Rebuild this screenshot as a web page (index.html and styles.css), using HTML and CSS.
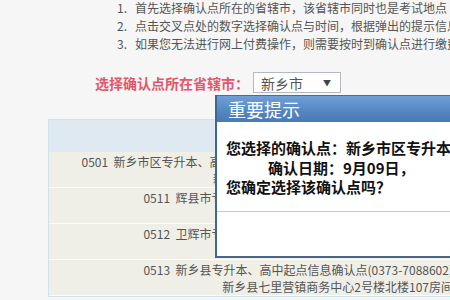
FILE: index.html
```html
<!DOCTYPE html>
<html lang="zh-CN">
<head>
    <meta charset="UTF-8">
    <title>选择确认点</title>
    <link rel="stylesheet" href="styles.css">
</head>
<body>
    <ul class="steps">
        <li><span class="num">1.</span>首先选择确认点所在的省辖市，该省辖市同时也是考试地点</li>
        <li><span class="num">2.</span>点击交叉点处的数字选择确认点与时间，根据弹出的提示信息确认</li>
        <li><span class="num">3.</span>如果您无法进行网上付费操作，则需要按时到确认点进行缴费</li>
    </ul>

    <div class="city-row">
        <label class="city-label">选择确认点所在省辖市：</label>
        <div class="city-select">
            <span>新乡市</span>
            <span class="arrow">▼</span>
        </div>
    </div>

    <div class="point-table">
        <div class="point-head"></div>
        <div class="point-row">0501&nbsp; 新乡市区专升本、高中起点信息确认点(0373-3033666,3033668)<br>新乡市人民路与新二街交叉口教育局院内一楼</div>
        <div class="point-row">0511&nbsp; 辉县市专升本、高中起点信息确认点(0373-6262735)<br>辉县市共城大道中段教育局招生办</div>
        <div class="point-row">0512&nbsp; 卫辉市专升本、高中起点信息确认点(0373-4410863)<br>卫辉市比干大道教育局招生办</div>
        <div class="point-row">0513&nbsp; 新乡县专升本、高中起点信息确认点(0373-7088602)<br>新乡县七里营镇商务中心2号楼北楼107房间</div>
    </div>

    <div class="dialog">
        <div class="dialog-title">重要提示</div>
        <div class="dialog-body">
            <p>您选择的确认点：新乡市区专升本、高中起点信息确认点，</p>
            <p class="date">确认日期：9月09日，</p>
            <p>您确定选择该确认点吗？</p>
        </div>
        <div class="dialog-foot"></div>
    </div>
</body>
</html>
```

FILE: styles.css
```css
body {
    margin: 0;
    background-color: #f6f6f6;
    font-family: "Noto Sans CJK SC", sans-serif;
    font-size: 12px;
    color: #555;
    overflow: hidden;
    height: 300px;
    position: relative;
}
.steps {
    list-style: none;
    margin: -1px 0 0;
    padding: 0 0 0 117px;
    white-space: nowrap;
}
.steps li {
    line-height: 18px;
}
.steps .num {
    display: inline-block;
    width: 18px;
}
.city-row {
    display: flex;
    align-items: center;
    margin-top: 19px;
    padding-left: 95px;
    height: 21px;
}
.city-label {
    color: #e2586b;
    font-size: 14px;
    font-weight: bold;
    margin-right: 4px;
}
.city-select {
    display: flex;
    align-items: center;
    justify-content: space-between;
    box-sizing: border-box;
    width: 88px;
    height: 21px;
    padding: 0 9px 0 7px;
    background-color: #fff;
    border: 1px solid #b4b9c0;
    font-size: 14px;
    color: #555;
}
.city-select .arrow {
    font-size: 8px;
    color: #444;
}
.point-table {
    margin: 26px 0 0 48px;
    width: 410px;
    border: 1px solid #cfe3ec;
    box-shadow: inset 1px 0 #f7fbfb;
}
.point-head {
    height: 32px;
    background-color: #dee9f1;
}
.point-row {
    background-color: #efefe8;
    border-bottom: 1px solid #fbfbf7;
    padding: 2px 6px 0 0;
    line-height: 16.5px;
    text-align: right;
    white-space: nowrap;
}
.dialog {
    position: absolute;
    left: 215px;
    top: 95px;
    width: 260px;
    height: 163px;
    display: flex;
    flex-direction: column;
    background-color: #fff;
    border-left: 2px solid #3c6898;
    border-bottom: 2px solid #4b6682;
    box-sizing: border-box;
}
.dialog-title {
    height: 27px;
    line-height: 27px;
    padding-left: 11px;
    background: linear-gradient(#6f9fd6, #5586c2 60%, #4a79b3);
    border-top: 1px solid #3f6fa6;
    box-sizing: border-box;
    color: #fff;
    font-size: 18px;
}
.dialog-body {
    padding: 16px 0 0 9px;
    height: 73px;
    border-bottom: 1px solid #c9c9c9;
    color: #111;
    font-size: 15px;
    font-weight: bold;
    white-space: nowrap;
}
.dialog-body p {
    margin: 0;
    line-height: 19.5px;
}
.dialog-body .date {
    padding-left: 42px;
}
.dialog-foot {
    flex: 1;
}
```
